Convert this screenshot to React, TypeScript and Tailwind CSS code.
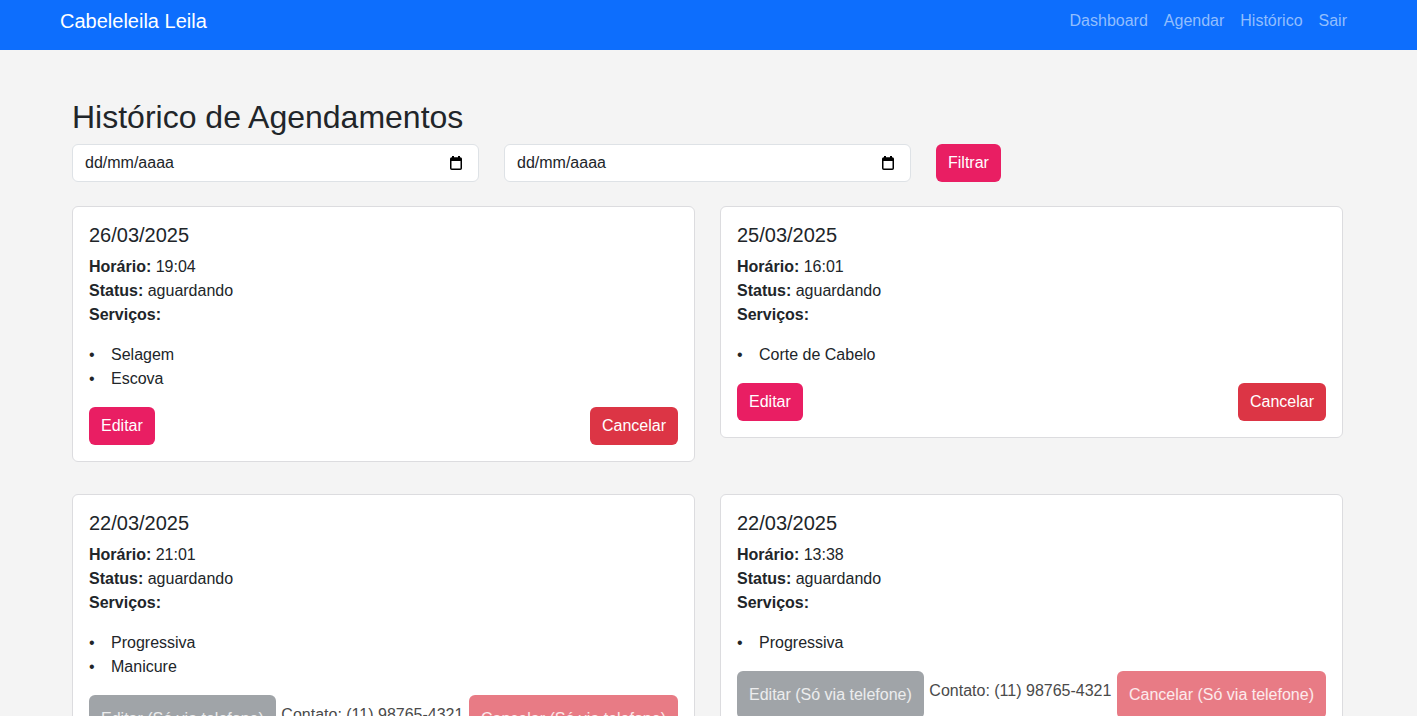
import React from "react";

type Appt = {
  date: string;
  time: string;
  status: string;
  services: string[];
  phoneOnly?: boolean;
};

const appts: Appt[] = [
  { date: "26/03/2025", time: "19:04", status: "aguardando", services: ["Selagem", "Escova"] },
  { date: "25/03/2025", time: "16:01", status: "aguardando", services: ["Corte de Cabelo"] },
  { date: "22/03/2025", time: "21:01", status: "aguardando", services: ["Progressiva", "Manicure"], phoneOnly: true },
  { date: "22/03/2025", time: "13:38", status: "aguardando", services: ["Progressiva"], phoneOnly: true },
];

const CalendarIcon = () => (
  <svg width="12" height="14" viewBox="0 0 12 14" className="shrink-0">
    <rect x="2" y="0" width="2" height="3" fill="#000" />
    <rect x="8" y="0" width="2" height="3" fill="#000" />
    <rect x="0.75" y="2" width="10.5" height="11.25" rx="1" fill="none" stroke="#000" strokeWidth="1.5" />
    <rect x="0.75" y="2" width="10.5" height="3" fill="#000" />
  </svg>
);

const DateField = () => (
  <div className="h-[38px] bg-white border border-[#dee2e6] rounded-[6px] flex items-center justify-between pl-[12px] pr-[16px] text-[16px] text-[#212529]">
    <span>dd/mm/aaaa</span>
    <CalendarIcon />
  </div>
);

const Card = ({ a }: { a: Appt }) => (
  <div className="bg-white border border-[#dcdcdf] rounded-[6px] p-[16px] self-start">
    <h5 className="text-[20px] leading-[24px] font-normal mb-[8px]">{a.date}</h5>
    <p className="leading-[24px]"><b>Horário:</b> {a.time}</p>
    <p className="leading-[24px]"><b>Status:</b> {a.status}</p>
    <p className="leading-[24px] mb-[16px]"><b>Serviços:</b></p>
    <ul className="mb-[16px] leading-[24px]">
      {a.services.map((s) => (
        <li key={s} className="flex">
          <span className="w-[22px]">•</span>
          {s}
        </li>
      ))}
    </ul>
    {a.phoneOnly ? (
      <div className="flex justify-between items-stretch">
        <button className="px-[12px] rounded-[6px] bg-[#a0a4a8] text-white/80 text-[16px]">Editar (Só via telefone)</button>
        <p className="mt-[8px] mb-[16px] leading-[24px] text-[#4a4a4a]">Contato: (11) 98765-4321</p>
        <button className="px-[12px] rounded-[6px] bg-[#e87b85] text-white/85 text-[16px]">Cancelar (Só via telefone)</button>
      </div>
    ) : (
      <div className="flex justify-between">
        <button className="h-[38px] px-[12px] rounded-[6px] bg-[#e91e63] text-white text-[16px]">Editar</button>
        <button className="h-[38px] px-[12px] rounded-[6px] bg-[#dc3545] text-white text-[16px]">Cancelar</button>
      </div>
    )}
  </div>
);

export default function App() {
  return (
    <div className="min-h-screen bg-[#f4f4f4] text-[#212529] text-[16px] font-['Liberation_Sans',Arial,sans-serif]">
      <nav className="h-[50px] bg-[#0d6efd] flex items-start justify-between pt-[6px] pl-[60px] pr-[62px]">
        <span className="text-white text-[20px] leading-[30px]">Cabeleleila Leila</span>
        <div className="flex text-[16px] leading-[30px] text-[#92befe]">
          {["Dashboard", "Agendar", "Histórico", "Sair"].map((l) => (
            <a key={l} className="px-[8px]">{l}</a>
          ))}
        </div>
      </nav>

      <main className="ml-[72px] w-[1271px] pt-[48px] pb-[40px]">
        <h2 className="text-[32px] leading-[38px] font-normal mb-[8px]">Histórico de Agendamentos</h2>
        <div className="grid grid-cols-3 gap-x-[25px]">
          <DateField />
          <DateField />
          <div>
            <button className="h-[38px] px-[12px] rounded-[6px] bg-[#e91e63] text-white text-[16px]">Filtrar</button>
          </div>
        </div>
        <div className="grid grid-cols-2 gap-x-[25px] gap-y-[32px] mt-[24px]">
          {appts.map((a, i) => <Card key={i} a={a} />)}
        </div>
      </main>
    </div>
  );
}
